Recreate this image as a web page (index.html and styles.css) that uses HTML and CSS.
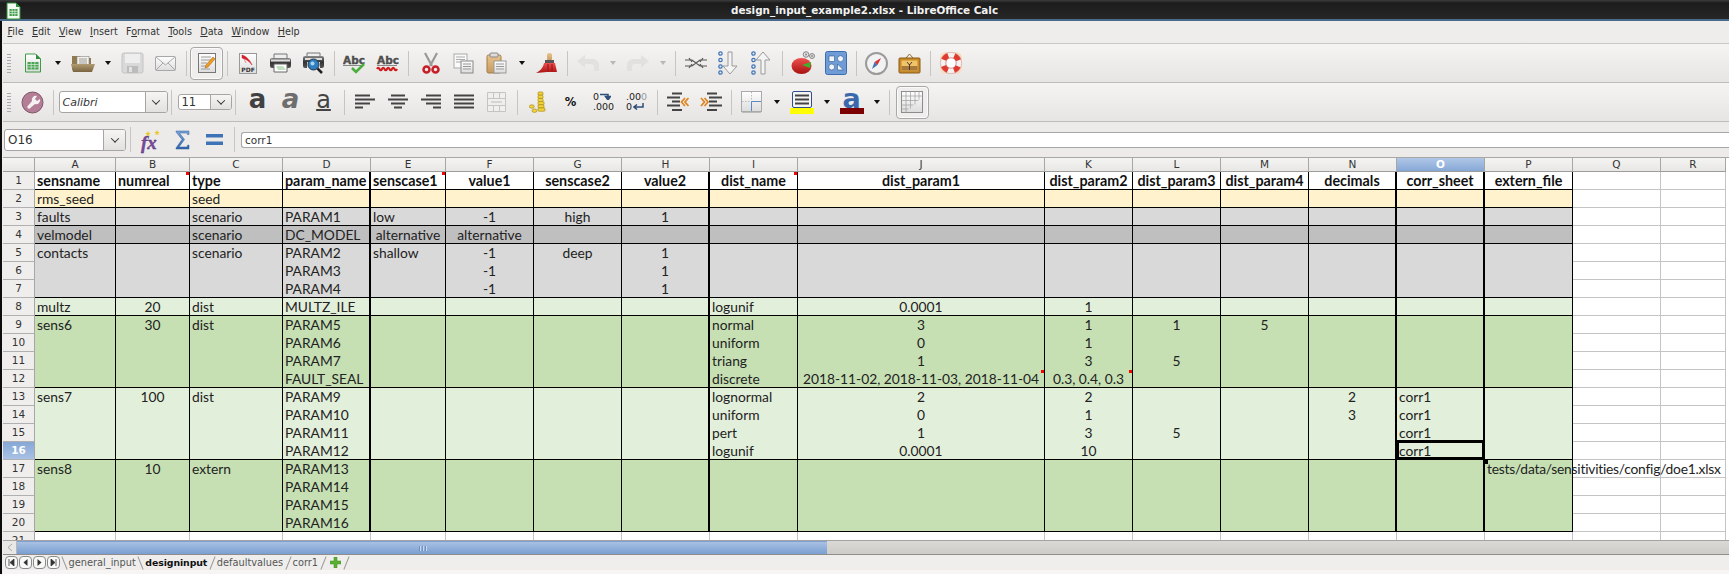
FILE: index.html
```html
<!DOCTYPE html>
<html lang="en">
<head>
<meta charset="utf-8">
<title>design_input_example2.xlsx - LibreOffice Calc</title>
<link rel="stylesheet" href="styles.css">
</head>
<body>
<svg class="defs" aria-hidden="true"><defs>
<linearGradient id="gDark" x1="0" y1="0" x2="0" y2="1"><stop offset="0" stop-color="#8a8a8a"/><stop offset=".5" stop-color="#333"/><stop offset="1" stop-color="#555"/></linearGradient>
<linearGradient id="gBlue" x1="0" y1="0" x2="0" y2="1"><stop offset="0" stop-color="#7ea6dc"/><stop offset="1" stop-color="#2f62a8"/></linearGradient>
<linearGradient id="gTan" x1="0" y1="0" x2="0" y2="1"><stop offset="0" stop-color="#e9c48e"/><stop offset="1" stop-color="#c79a5e"/></linearGradient>
<linearGradient id="gRed" x1="0" y1="0" x2="0" y2="1"><stop offset="0" stop-color="#f05050"/><stop offset="1" stop-color="#a81010"/></linearGradient>
<linearGradient id="gPaper" x1="0" y1="0" x2="0" y2="1"><stop offset="0" stop-color="#fff"/><stop offset="1" stop-color="#dcdcdc"/></linearGradient>
<linearGradient id="gFolder" x1="0" y1="0" x2="0" y2="1"><stop offset="0" stop-color="#b09c72"/><stop offset="1" stop-color="#7a6440"/></linearGradient>
</defs></svg>

<header class="titlebar">
  <svg class="appicon" width="15" height="18" viewBox="0 0 15 18"><path d="M1 1h9l4 4v12H1z" fill="#f4fbf2" stroke="#2f8f3a"/><path d="M10 1l4 4h-4z" fill="#2f8f3a"/><rect x="3.500" y="7" width="8" height="7" fill="#3c9c46"/><path d="M3.500 9.300h8M3.500 11.600h8M6.200 7v7M8.900 7v7" stroke="#e8f5e6" stroke-width=".7"/></svg>
  <span class="titletext">design_input_example2.xlsx - LibreOffice Calc</span>
</header>

<div class="window">
<nav class="menubar">
  <span><u>F</u>ile</span><span><u>E</u>dit</span><span><u>V</u>iew</span><span><u>I</u>nsert</span><span>F<u>o</u>rmat</span><span><u>T</u>ools</span><span><u>D</u>ata</span><span><u>W</u>indow</span><span><u>H</u>elp</span>
</nav>

<div class="toolbar">
  <i class="grip"></i>
  <b class="btn"><svg width="18" height="20" viewBox="0 0 18 20"><path d="M1.500 1h10l5 5v13h-15z" fill="url(#gPaper)" stroke="#3f9a45"/><path d="M12 1l5 5h-5z" fill="#2f8f3a"/><rect x="3.500" y="9" width="11" height="7.500" fill="#49a552"/><path d="M3.500 11.500h11M3.500 14h11M7.200 9v7.500M10.900 9v7.500" stroke="#dff0dc" stroke-width=".7"/></svg></b>
  <b class="dd"><i class="arrow"></i></b>
  <b class="btn"><svg width="24" height="20" viewBox="0 0 24 20"><path d="M1 3h8l2 2h9v12H1z" fill="#8f7a52"/><rect x="6" y="3.500" width="12" height="9" fill="#f3f1ea" stroke="#888" stroke-width=".6"/><path d="M8 6h8M8 8h8M8 10h8" stroke="#888" stroke-width=".8"/><path d="M0 11h24l-3 8H2z" fill="url(#gFolder)"/></svg></b>
  <b class="dd"><i class="arrow"></i></b>
  <b class="btn"><svg width="23" height="22" viewBox="0 0 23 22"><rect x="1" y="1" width="21" height="20" rx="2" fill="#d9d9d9" stroke="#c4c4c4"/><rect x="4" y="2" width="15" height="9" fill="#eee"/><rect x="6" y="14" width="11" height="7" fill="#bcbcbc"/><rect x="8" y="15" width="3" height="5" fill="#e2e2e2"/></svg></b>
  <b class="btn"><svg width="21" height="15" viewBox="0 0 21 15"><rect x=".5" y=".5" width="20" height="14" rx="1" fill="url(#gPaper)" stroke="#a8a8a8"/><path d="M1 1l9.500 8L20 1M1 14l7-7M20 14l-7-7" fill="none" stroke="#a8a8a8"/></svg></b>
  <i class="sep"></i>
  <b class="btn on"><svg width="18" height="22" viewBox="0 0 18 22"><rect x=".5" y="1.500" width="17" height="19" fill="url(#gPaper)" stroke="#777"/><path d="M3 5h10M3 8h10M3 11h6M3 14h5M3 17h9" stroke="#9a9a9a"/><path d="M7 16l1-3 7-8 2 2-7 8z" fill="#f09a20" stroke="#a85e10" stroke-width=".5"/></svg></b>
  <i class="sep"></i>
  <b class="btn"><svg width="18" height="21" viewBox="0 0 18 21"><rect x=".5" y=".5" width="17" height="20" fill="url(#gPaper)" stroke="#999"/><path d="M3 2c4 1 8 5 10 10-3-4-6-6-10-7zM3 2l4 8" fill="#d4202a" stroke="#d4202a" stroke-width=".5"/><text x="9" y="19" class="pdf">PDF</text></svg></b>
  <b class="btn"><svg width="23" height="20" viewBox="0 0 23 20"><path d="M5 1h13v5H5z" fill="#eee" stroke="#777"/><rect x="1" y="5" width="21" height="10" rx="2" fill="url(#gDark)"/><rect x="2" y="6.500" width="19" height="2" fill="#ddd"/><path d="M5 11h13v8H5z" fill="#fff" stroke="#666"/><path d="M7 13h7l3 4H9z" fill="#bfe0bf"/></svg></b>
  <b class="btn"><svg width="24" height="22" viewBox="0 0 24 22"><path d="M5 1h13v5H5z" fill="#eee" stroke="#777"/><rect x="1" y="4" width="21" height="12" rx="2" fill="url(#gDark)"/><rect x="3" y="6" width="17" height="2" fill="#ddd"/><rect x="5" y="10" width="13" height="9" fill="#eee"/><circle cx="11.500" cy="12.500" r="5.500" fill="#2f7fc0" stroke="#234"/><circle cx="10.500" cy="11.500" r="2" fill="#a8d6f0"/><path d="M15.500 16.500l4.500 4.500" stroke="#222" stroke-width="2.500"/></svg></b>
  <i class="sep"></i>
  <b class="btn"><svg width="24" height="21" viewBox="0 0 24 21"><text x="0" y="11" class="abc">Abc</text><path d="M0 12.500h21" stroke="#888"/><path d="M9 15l4 4 8-8" fill="none" stroke="#4cae3c" stroke-width="2.600"/></svg></b>
  <b class="btn"><svg width="23" height="21" viewBox="0 0 23 21"><text x="1" y="11" class="abc">Abc</text><path d="M1 12.500h20" stroke="#888"/><path d="M1 16q1.200-2.500 2.500 0t2.500 0 2.500 0 2.500 0 2.500 0 2.500 0 2.500 0 2.500 0" fill="none" stroke="#d01c1c" stroke-width="2.200"/></svg></b>
  <i class="sep sep-r"></i>
  <b class="btn"><svg width="18" height="22" viewBox="0 0 18 22"><path d="M3 1l7 13M15 1L8 14" stroke="#999" stroke-width="2.200"/><circle cx="4.500" cy="17.500" r="3" fill="none" stroke="#c81e28" stroke-width="2.500"/><circle cx="13.500" cy="17.500" r="3" fill="none" stroke="#c81e28" stroke-width="2.500"/></svg></b>
  <b class="btn"><svg width="21" height="21" viewBox="0 0 21 21"><rect x="1" y="1" width="13" height="14" fill="#fafafa" stroke="#aaa"/><path d="M3 4h9M3 6.500h9M3 9h9" stroke="#aaa"/><rect x="8" y="8" width="12" height="12" fill="url(#gPaper)" stroke="#888"/><path d="M10 11h8M10 13.500h8M10 16h8" stroke="#999"/></svg></b>
  <b class="btn"><svg width="21" height="22" viewBox="0 0 21 22"><rect x="1" y="3" width="14" height="18" rx="1.500" fill="url(#gTan)" stroke="#a07c48"/><rect x="4" y="1" width="8" height="4" rx="1" fill="#ddd" stroke="#888"/><rect x="8" y="9" width="12" height="12" fill="url(#gPaper)" stroke="#999"/><path d="M10 12h8M10 14.500h8M10 17h8" stroke="#999"/></svg></b>
  <b class="dd"><i class="arrow"></i></b>
  <b class="btn"><svg width="23" height="22" viewBox="0 0 23 22"><rect x="12" y="1" width="5" height="8" rx="2" fill="url(#gTan)"/><rect x="10" y="8" width="9" height="3" fill="#555"/><path d="M9 11h11l2 9H12L1 21c4-2 7-5 8-10z" fill="url(#gRed)"/><path d="M13 12v7M17 12v7" stroke="#8e1414"/></svg></b>
  <i class="sep"></i>
  <b class="btn off"><svg width="24" height="18" viewBox="0 0 24 18"><path d="M1 7l8-6v4h8q6 1 6 6v6h-5v-4q0-3-3-3H9v4z" fill="#e2e1df"/></svg></b>
  <b class="dd"><i class="arrow pale"></i></b>
  <b class="btn off"><svg width="24" height="18" viewBox="0 0 24 18"><path d="M23 7l-8-6v4H7q-6 1-6 6v6h5v-4q0-3 3-3h6v4z" fill="#e2e1df"/></svg></b>
  <b class="dd"><i class="arrow pale"></i></b>
  <i class="sep"></i>
  <b class="btn"><svg width="22" height="12" viewBox="0 0 22 12"><path d="M0 3h7l4 3 4-3h7M0 9h7l4-3 4 3h7M4 1l3 4M4 11l3-4M18 1l-3 4M18 11l-3-4" fill="none" stroke="#555" stroke-width="1.200"/></svg></b>
  <b class="btn"><svg width="21" height="24" viewBox="0 0 21 24"><g fill="none" stroke="#3f73b8" stroke-width="1.200"><circle cx="2.500" cy="2.500" r="1.700"/><circle cx="2.500" cy="9" r="1.700"/><circle cx="2.500" cy="15.500" r="1.700"/><circle cx="2.500" cy="21.500" r="1.700"/></g><path d="M10 1h4v14h5l-7 8-7-8h5z" fill="#f4f4f4" stroke="#9a9a9a"/></svg></b>
  <b class="btn"><svg width="21" height="24" viewBox="0 0 21 24"><g fill="none" stroke="#3f73b8" stroke-width="1.200"><circle cx="2.500" cy="2.500" r="1.700"/><circle cx="2.500" cy="9" r="1.700"/><circle cx="2.500" cy="15.500" r="1.700"/><circle cx="2.500" cy="21.500" r="1.700"/></g><path d="M10 23h4V9h5l-7-8-7 8h5z" fill="#f4f4f4" stroke="#9a9a9a"/></svg></b>
  <i class="sep"></i>
  <b class="btn"><svg width="24" height="24" viewBox="0 0 24 24"><ellipse cx="10.500" cy="15" rx="10" ry="8" fill="url(#gRed)"/><path d="M11 14l9-3-1 6z" fill="#43b02a"/><circle cx="15" cy="3.500" r="2.800" fill="#ddd" stroke="#888"/><circle cx="21" cy="5" r="2.500" fill="#ddd" stroke="#888"/><circle cx="15" cy="3.500" r=".9" fill="#888"/><circle cx="21" cy="5" r=".9" fill="#888"/></svg></b>
  <b class="btn"><svg width="22" height="24" viewBox="0 0 22 24"><rect x=".5" y=".5" width="21" height="23" rx="2" fill="#6f9bd6" stroke="#3a6db0"/><rect x="4" y="5" width="5.500" height="5.500" fill="#f0f5fc" stroke="#2c558c" stroke-width=".6"/><circle cx="15.500" cy="7.700" r="3" fill="#f0f5fc" stroke="#2c558c" stroke-width=".6"/><circle cx="6.700" cy="16" r="3" fill="#f0f5fc" stroke="#2c558c" stroke-width=".6"/><path d="M12.500 19v-6l6 6z" fill="#f0f5fc" stroke="#2c558c" stroke-width=".6"/></svg></b>
  <i class="sep"></i>
  <b class="btn"><svg width="23" height="23" viewBox="0 0 23 23"><circle cx="11.500" cy="11.500" r="10.500" fill="#f2f2f2" stroke="#9a9a9a" stroke-width="2"/><path d="M16 6l-3.500 7-3-3z" fill="#d83030"/><path d="M7 17l2.500-7 3 3z" fill="#3f73b8"/></svg></b>
  <b class="btn"><svg width="23" height="22" viewBox="0 0 23 22"><path d="M8 6l3.500-4L15 6" fill="none" stroke="#8a6a34"/><rect x="1" y="6" width="21" height="15" rx="1" fill="#c98a28" stroke="#8a5a14"/><rect x="3.500" y="8.500" width="16" height="10" fill="#f0c468"/><path d="M3.500 14h16v4.500h-16z" fill="#a87a3a"/><path d="M11.500 18v-6M9 10l2.500 3 2.500-3" stroke="#533" fill="none"/></svg></b>
  <i class="sep"></i>
  <b class="btn"><svg width="24" height="24" viewBox="0 0 24 24"><rect x="1" y="1" width="22" height="22" rx="6" fill="#f8dcc0"/><circle cx="12" cy="12" r="8" fill="none" stroke="#f4f2f0" stroke-width="5.500"/><circle cx="12" cy="12" r="8" fill="none" stroke="#e0392e" stroke-width="5.500" stroke-dasharray="6.300 6.270" stroke-dashoffset="3.100" transform="rotate(45 12 12)"/><circle cx="12" cy="12" r="5.200" fill="#fff" stroke="#b55" stroke-width=".6"/><circle cx="12" cy="12" r="10.700" fill="none" stroke="#c88" stroke-width=".5"/></svg></b>
</div>

<div class="toolbar">
  <i class="grip"></i>
  <b class="btn"><svg width="23" height="23" viewBox="0 0 23 23"><circle cx="11.500" cy="11.500" r="10.500" fill="#b47f96" stroke="#7d5468"/><path d="M16 5a4 4 0 0 0-5 5l-5 6 2 2 6-5a4 4 0 0 0 5-5l-3 2-2-2z" fill="#f6f2f3"/></svg></b>
  <i class="sep wide"></i>
  <div class="combo fontname"><span>Calibri</span><b class="drop"><i class="chev"></i></b></div>
  <i class="sep narrow"></i>
  <div class="combo fontsize"><span>11</span><b class="drop"><i class="chev"></i></b></div>
  <i class="sep wide"></i>
  <b class="btn"><span class="glyph bold">a</span></b>
  <b class="btn"><span class="glyph ital">a</span></b>
  <b class="btn"><span class="glyph under">a</span></b>
  <i class="sep"></i>
  <b class="btn"><svg width="20" height="16" viewBox="0 0 20 16"><path d="M0 1.500h15M0 5.500h20M0 9.500h15M0 13.500h8" stroke="#444" stroke-width="2"/></svg></b>
  <b class="btn"><svg width="20" height="16" viewBox="0 0 20 16"><path d="M3 1.500h14M0 5.500h20M3 9.500h14M6 13.500h8" stroke="#444" stroke-width="2"/></svg></b>
  <b class="btn"><svg width="20" height="16" viewBox="0 0 20 16"><path d="M5 1.500h15M0 5.500h20M5 9.500h15M12 13.500h8" stroke="#444" stroke-width="2"/></svg></b>
  <b class="btn"><svg width="20" height="16" viewBox="0 0 20 16"><path d="M0 1.500h20M0 5.500h20M0 9.500h20M0 13.500h20" stroke="#444" stroke-width="2"/></svg></b>
  <b class="btn"><svg width="19" height="20" viewBox="0 0 19 20"><path d="M.5.500h18v19H.5zM.5 6.500h18M.5 13.500h18M6.500.500v6M12.500.500v6M6.500 13.500v6M12.500 13.500v6" fill="#f0efee" stroke="#c4c4c4"/><path d="M4 10h11" stroke="#bbb"/></svg></b>
  <i class="sep"></i>
  <b class="btn"><svg width="17" height="22" viewBox="0 0 17 22"><g fill="#f2d43a" stroke="#a88a14" stroke-width=".7"><rect x="9" y="1" width="5" height="3.200" rx="1"/><rect x="9" y="4.200" width="5" height="3.200" rx="1"/><rect x="9" y="7.400" width="5" height="3.200" rx="1"/><rect x="9" y="10.600" width="6" height="3.200" rx="1"/><rect x="9" y="13.800" width="6" height="3.200" rx="1"/><rect x="9" y="17" width="7" height="3.200" rx="1"/><ellipse cx="2.800" cy="15.500" rx="2.500" ry="1.700"/><ellipse cx="5.500" cy="19.700" rx="2.500" ry="1.700"/></g></svg></b>
  <b class="btn"><span class="pct">%</span></b>
  <b class="btn"><span class="numfmt"><span>0<svg width="11" height="7" viewBox="0 0 11 7"><path d="M0 1.500h8v4M5.500 3.500h5L8 7z" fill="none" stroke="#2f4f7a" stroke-width="1.500"/></svg></span><span>.000</span></span></b>
  <b class="btn"><span class="numfmt"><span>.00<em>0</em></span><span>0<svg width="11" height="7" viewBox="0 0 11 7"><path d="M10 0v4H2M4 1.500L1 4l3 2.500" fill="none" stroke="#2f4f7a" stroke-width="1.500"/></svg></span></span></b>
  <i class="sep"></i>
  <b class="btn"><svg width="22" height="20" viewBox="0 0 22 20"><path d="M5 1.500h10M0 5.500h13M5 9.500h8M0 13.500h13M5 18h10" stroke="#444" stroke-width="2"/><path d="M18 6l-3.500 4 3.500 4M21.500 6L18 10l3.500 4" fill="none" stroke="#e08420" stroke-width="1.700"/></svg></b>
  <b class="btn"><svg width="22" height="20" viewBox="0 0 22 20"><path d="M7 1.500h10M9 5.500h13M9 9.500h8M9 13.500h13M7 18h10" stroke="#444" stroke-width="2"/><path d="M1 6l3.500 4L1 14M4.500 6L8 10l-3.500 4" fill="none" stroke="#e08420" stroke-width="1.700"/></svg></b>
  <i class="sep"></i>
  <b class="btn"><svg width="21" height="22" viewBox="0 0 21 22"><rect x=".5" y=".5" width="20" height="20" fill="url(#gPaper)" stroke="#aaa"/><path d="M10.500 1v9.500M1 10.500h9.500" stroke="#b9b9b9" stroke-dasharray="1.500 1.500"/><path d="M10.500 10.500V20M10.500 10.500H20" stroke="#5c8ac4"/><path d="M1 21.500h19" stroke="#bbb"/></svg></b>
  <b class="dd"><i class="arrow"></i></b>
  <b class="btn"><span class="swatchicon"><svg width="20" height="17" viewBox="0 0 20 17"><rect x=".5" y=".5" width="19" height="16" rx="1.500" fill="#f5f5f5" stroke="#2f4f8a"/><path d="M3 4.500h14M3 8.500h14M3 12.500h14" stroke="#444" stroke-width="2"/></svg><i class="swatch yellow"></i></span></b>
  <b class="dd"><i class="arrow"></i></b>
  <b class="btn"><span class="swatchicon"><span class="glyph blue">a</span><i class="swatch maroon"></i></span></b>
  <b class="dd"><i class="arrow"></i></b>
  <i class="sep sep-last"></i>
  <b class="btn on"><svg width="22" height="22" viewBox="0 0 22 22"><rect x=".5" y=".5" width="21" height="21" fill="url(#gPaper)" stroke="#8c8c8c"/><path d="M.5 5h21M.5 9.500h17M.5 14h12M.5 18h7M5 .5v21M9.500.5v17M14 .5v13M18 .5v8" stroke="#a6a6a6" stroke-width=".8"/></svg></b>
</div>

<div class="formulabar">
  <div class="combo namebox"><span>O16</span><b class="drop"><i class="chev"></i></b></div>
  <i class="sep"></i>
  <b class="btn fbtn"><svg class="fxicon" width="24" height="24" viewBox="0 0 24 24"><text x="3" y="21" class="fx">fx</text><path d="M10 3l.8 1.800 1.800.2-1.300 1.300.3 1.900-1.600-1-1.600 1 .3-1.900L7.400 5l1.800-.2zM19 2l.8 1.800 1.800.2-1.300 1.300.3 1.900-1.600-1-1.600 1 .3-1.900L16.400 4l1.800-.2z" fill="#e8c82c"/></svg></b>
  <b class="btn fbtn"><svg width="15" height="20" viewBox="0 0 15 20"><path d="M1 1h13v3.500h-1.500L12 3H4.500l5 6.500-5.500 7.500h8l.8-2H14v4H1v-1l6-8.500L1 2z" fill="url(#gBlue)" stroke="#2f5f9e" stroke-width=".5"/></svg></b>
  <b class="btn fbtn"><svg width="17" height="11" viewBox="0 0 17 11"><rect y="0" width="17" height="3.500" fill="#3f73b8"/><rect y="7.500" width="17" height="3.500" fill="#3f73b8"/></svg></b>
  <i class="sep"></i>
  <div class="formulainput">corr1</div>
</div>

<div class="sheet">
<table class="grid">
<colgroup><col class="c-row"><col class="c-a"><col class="c-b"><col class="c-c"><col class="c-d"><col class="c-e"><col class="c-n"><col class="c-n"><col class="c-n"><col class="c-n"><col class="c-j"><col class="c-n"><col class="c-n"><col class="c-n"><col class="c-n"><col class="c-n"><col class="c-n"><col class="c-n"><col class="c-r"></colgroup>
<thead>
<tr><th class="corner"></th><th>A</th><th>B</th><th>C</th><th>D</th><th>E</th><th>F</th><th>G</th><th>H</th><th>I</th><th>J</th><th>K</th><th>L</th><th>M</th><th>N</th><th class="active">O</th><th>P</th><th>Q</th><th>R</th></tr>
</thead>
<tbody class="hdr">
<tr><th>1</th><td>sensname</td><td class="note">numreal</td><td>type</td><td class="t">param_name</td><td class="note">senscase1</td><td class="m">value1</td><td class="m">senscase2</td><td class="m t">value2</td><td class="note m">dist_name</td><td class="m">dist_param1</td><td class="m">dist_param2</td><td class="m">dist_param3</td><td class="m">dist_param4</td><td class="m t">decimals</td><td class="m t">corr_sheet</td><td class="m">extern_file</td><td class="e"></td><td class="e"></td></tr>
</tbody>
<tbody class="seed">
<tr><th>2</th><td>rms_seed</td><td></td><td>seed</td><td class="t"></td><td></td><td></td><td></td><td class="t"></td><td></td><td></td><td></td><td></td><td></td><td class="t"></td><td class="t"></td><td></td><td class="e"></td><td class="e"></td></tr>
</tbody>
<tbody class="grey">
<tr><th>3</th><td>faults</td><td></td><td>scenario</td><td class="t">PARAM1</td><td>low</td><td class="m">-1</td><td class="m">high</td><td class="m t">1</td><td></td><td></td><td></td><td></td><td></td><td class="t"></td><td class="t"></td><td></td><td class="e"></td><td class="e"></td></tr>
</tbody>
<tbody class="dark">
<tr><th>4</th><td>velmodel</td><td></td><td>scenario</td><td class="t">DC_MODEL</td><td class="m">alternative</td><td class="m">alternative</td><td></td><td class="t"></td><td></td><td></td><td></td><td></td><td></td><td class="t"></td><td class="t"></td><td></td><td class="e"></td><td class="e"></td></tr>
</tbody>
<tbody class="grey">
<tr><th>5</th><td>contacts</td><td></td><td>scenario</td><td class="t">PARAM2</td><td>shallow</td><td class="m">-1</td><td class="m">deep</td><td class="m t">1</td><td></td><td></td><td></td><td></td><td></td><td class="t"></td><td class="t"></td><td></td><td class="e"></td><td class="e"></td></tr>
<tr><th>6</th><td></td><td></td><td></td><td class="t">PARAM3</td><td></td><td class="m">-1</td><td></td><td class="m t">1</td><td></td><td></td><td></td><td></td><td></td><td class="t"></td><td class="t"></td><td></td><td class="e"></td><td class="e"></td></tr>
<tr><th>7</th><td></td><td></td><td></td><td class="t">PARAM4</td><td></td><td class="m">-1</td><td></td><td class="m t">1</td><td></td><td></td><td></td><td></td><td></td><td class="t"></td><td class="t"></td><td></td><td class="e"></td><td class="e"></td></tr>
</tbody>
<tbody class="pale">
<tr><th>8</th><td>multz</td><td class="m">20</td><td>dist</td><td class="t">MULTZ_ILE</td><td></td><td></td><td></td><td class="t"></td><td>logunif</td><td class="m">0.0001</td><td class="m">1</td><td></td><td></td><td class="t"></td><td class="t"></td><td></td><td class="e"></td><td class="e"></td></tr>
</tbody>
<tbody class="green">
<tr><th>9</th><td>sens6</td><td class="m">30</td><td>dist</td><td class="t">PARAM5</td><td></td><td></td><td></td><td class="t"></td><td>normal</td><td class="m">3</td><td class="m">1</td><td class="m">1</td><td class="m">5</td><td class="t"></td><td class="t"></td><td></td><td class="e"></td><td class="e"></td></tr>
<tr><th>10</th><td></td><td></td><td></td><td class="t">PARAM6</td><td></td><td></td><td></td><td class="t"></td><td>uniform</td><td class="m">0</td><td class="m">1</td><td></td><td></td><td class="t"></td><td class="t"></td><td></td><td class="e"></td><td class="e"></td></tr>
<tr><th>11</th><td></td><td></td><td></td><td class="t">PARAM7</td><td></td><td></td><td></td><td class="t"></td><td>triang</td><td class="m">1</td><td class="m">3</td><td class="m">5</td><td></td><td class="t"></td><td class="t"></td><td></td><td class="e"></td><td class="e"></td></tr>
<tr><th>12</th><td></td><td></td><td></td><td class="t">FAULT_SEAL</td><td></td><td></td><td></td><td class="t"></td><td>discrete</td><td class="m note">2018-11-02, 2018-11-03, 2018-11-04</td><td class="m note">0.3, 0.4, 0.3</td><td></td><td></td><td class="t"></td><td class="t"></td><td></td><td class="e"></td><td class="e"></td></tr>
</tbody>
<tbody class="pale">
<tr><th>13</th><td>sens7</td><td class="m">100</td><td>dist</td><td class="t">PARAM9</td><td></td><td></td><td></td><td class="t"></td><td>lognormal</td><td class="m">2</td><td class="m">2</td><td></td><td></td><td class="m t">2</td><td class="t">corr1</td><td></td><td class="e"></td><td class="e"></td></tr>
<tr><th>14</th><td></td><td></td><td></td><td class="t">PARAM10</td><td></td><td></td><td></td><td class="t"></td><td>uniform</td><td class="m">0</td><td class="m">1</td><td></td><td></td><td class="m t">3</td><td class="t">corr1</td><td></td><td class="e"></td><td class="e"></td></tr>
<tr><th>15</th><td></td><td></td><td></td><td class="t">PARAM11</td><td></td><td></td><td></td><td class="t"></td><td>pert</td><td class="m">1</td><td class="m">3</td><td class="m">5</td><td></td><td class="t"></td><td class="t">corr1</td><td></td><td class="e"></td><td class="e"></td></tr>
<tr><th class="active">16</th><td></td><td></td><td></td><td class="t">PARAM12</td><td></td><td></td><td></td><td class="t"></td><td>logunif</td><td class="m">0.0001</td><td class="m">10</td><td></td><td></td><td class="t"></td><td class="t cursor">corr1<i class="selbox"></i><i class="handle"></i></td><td></td><td class="e"></td><td class="e"></td></tr>
</tbody>
<tbody class="green">
<tr><th>17</th><td>sens8</td><td class="m">10</td><td>extern</td><td class="t">PARAM13</td><td></td><td></td><td></td><td class="t"></td><td></td><td></td><td></td><td></td><td></td><td class="t"></td><td class="t"></td><td class="path">tests/data/sensitivities/config/doe1.xlsx</td><td class="e"></td><td class="e"></td></tr>
<tr><th>18</th><td></td><td></td><td></td><td class="t">PARAM14</td><td></td><td></td><td></td><td class="t"></td><td></td><td></td><td></td><td></td><td></td><td class="t"></td><td class="t"></td><td></td><td class="e"></td><td class="e"></td></tr>
<tr><th>19</th><td></td><td></td><td></td><td class="t">PARAM15</td><td></td><td></td><td></td><td class="t"></td><td></td><td></td><td></td><td></td><td></td><td class="t"></td><td class="t"></td><td></td><td class="e"></td><td class="e"></td></tr>
<tr><th>20</th><td></td><td></td><td></td><td class="t">PARAM16</td><td></td><td></td><td></td><td class="t"></td><td></td><td></td><td></td><td></td><td></td><td class="t"></td><td class="t"></td><td></td><td class="e"></td><td class="e"></td></tr>
</tbody>
<tbody class="blank">
<tr><th>21</th><td></td><td></td><td></td><td></td><td></td><td></td><td></td><td></td><td></td><td></td><td></td><td></td><td></td><td></td><td></td><td></td><td></td><td></td></tr>
</tbody>
</table>
</div>

<div class="hscroll">
  <b class="sbtn"><svg width="6" height="9" viewBox="0 0 6 9"><path d="M5 1L1 4.500 5 8" fill="none" stroke="#aaa"/></svg></b>
  <div class="thumb"><i></i><i></i><i></i></div>
</div>

<div class="tabbar">
  <div class="navs">
    <b><svg width="7" height="7" viewBox="0 0 7 7"><path d="M1 0v7M6 0L2 3.500 6 7z" stroke="#333" fill="#333" stroke-width=".8"/></svg></b>
    <b><svg width="7" height="7" viewBox="0 0 7 7"><path d="M5.500 0L1.500 3.500 5.500 7z" fill="#333"/></svg></b>
    <b><svg width="7" height="7" viewBox="0 0 7 7"><path d="M1.500 0l4 3.500-4 3.500z" fill="#333"/></svg></b>
    <b><svg width="7" height="7" viewBox="0 0 7 7"><path d="M6 0v7M1 0l4 3.500L1 7z" stroke="#333" fill="#333" stroke-width=".8"/></svg></b>
  </div>
  <span class="tab first">general_input</span>
  <span class="tab current">designinput</span>
  <span class="tab">defaultvalues</span>
  <span class="tab">corr1</span>
  <span class="tab add"><svg width="11" height="11" viewBox="0 0 11 11"><path d="M4 0h3v4h4v3H7v4H4V7H0V4h4z" fill="#58b030" stroke="#3f8a20" stroke-width=".5"/></svg></span>
</div>
<div class="statusedge"></div>
</div>
</body>
</html>
```

FILE: styles.css
```css
* { box-sizing: border-box; }
html, body { margin: 0; height: 100%; }
body {
  width: 1729px; height: 574px; overflow: hidden;
  display: flex; flex-direction: column;
  background: #efeeec;
  font-family: "DejaVu Sans", sans-serif; color: #222;
}
.defs { position: absolute; width: 0; height: 0; }

.titlebar {
  height: 21px; flex: none; position: relative;
  display: flex; align-items: center; justify-content: center;
  background: linear-gradient(#3c3c3c 0, #1c1c1c 3px, #262626 18px);
  border-bottom: 2px solid #4a6a8c;
}
.appicon { position: absolute; left: 6px; top: 2px; }
.titletext { color: #f2f2f2; font-size: 10.4px; font-weight: 700; }

.window {
  flex: 1; min-height: 0; display: flex; flex-direction: column;
  border-left: 2px solid #0c0c0c; padding-left: 1px;
  background: #efeeec;
}
.menubar {
  height: 23px; flex: none; display: flex; align-items: center; gap: 8.400px;
  padding: 0 0 1px 4.500px; font-size: 9.600px; color: #333;
  background: #eeedeb; border-bottom: 1px solid #c9c8c6;
}

.toolbar {
  height: 39px; flex: none; display: flex; align-items: center;
  background: linear-gradient(#f5f4f3, #e6e5e3);
  border-bottom: 1px solid #bdbcba;
  font-weight: 400;
}
.grip {
  width: 4px; height: 20px; margin: 0 5.500px 0 3.500px; flex: none;
  background: radial-gradient(circle, #aaa 0.7px, transparent 1px) 0 0 / 2px 3px;
}
.btn {
  width: 33px; height: 33px; flex: none; font-weight: 400;
  display: flex; align-items: center; justify-content: center;
}
.btn.on { border: 1px solid #a9a8a6; border-radius: 4px; background: #efeeed; box-shadow: inset 0 0 0 1px #fafafa; }
.dd { width: 17px; height: 33px; flex: none; display: flex; align-items: center; justify-content: center; }
.arrow { width: 0; height: 0; border: 3.500px solid transparent; border-top: 4px solid #111; border-bottom: 0; }
.arrow.pale { border-top-color: #b8b8b8; }
.sep { width: 8px; height: 25px; flex: none; position: relative; }
.sep::after { content: ""; position: absolute; left: 3.500px; top: 0; bottom: 0; width: 1px; background: #c6c5c3; }
.sep.narrow { width: 10px; }
.sep.wide { width: 9.500px; }
.sep.sep-r { width: 10px; }
.sep.sep-last { width: 10.500px; }

.pdf { font: 700 6px "DejaVu Sans", sans-serif; fill: #333; text-anchor: middle; }
.abc { font: 700 10.500px "DejaVu Sans", sans-serif; fill: #555; stroke: #333; stroke-width: .3px; }
.fx { font: italic 700 19px "Liberation Serif", serif; fill: #7a4a9c; stroke: #4a2a70; stroke-width: .3px; }
.fxicon { overflow: visible; }

.glyph { font-family: "DejaVu Sans", sans-serif; line-height: 1; display: block; }
.glyph.bold { font-size: 26px; font-weight: 700; color: #414141; margin-top: -6px; }
.glyph.ital { font-size: 26px; font-weight: 700; font-style: italic; color: #6e6e6e; margin-top: -6px; }
.glyph.under { font-size: 24px; color: #444; margin-top: -5px; text-decoration: underline; text-decoration-thickness: 2px; }
.glyph.blue { font-size: 27px; font-weight: 700; color: #3a68ac; height: 17px; line-height: 15px; text-align: center; }
.pct { font-size: 11.500px; font-weight: 700; color: #111; }
.numfmt { display: flex; flex-direction: column; font-size: 9.500px; line-height: 10px; color: #222; align-items: flex-start; }
.numfmt svg { margin-left: 1px; }
.numfmt em { font-style: normal; color: #999; }
.swatchicon { display: flex; flex-direction: column; justify-content: flex-end; align-items: center; width: 24px; height: 24px; }
.swatch { width: 24px; height: 6px; display: block; }
.swatch.yellow { background: #ffff00; margin-top: 0; }
.swatch.maroon { background: #7c0000; margin-top: 0; }

.combo {
  flex: none; display: flex; background: #fff;
  border: 1px solid #a6a5a3; border-radius: 3px; overflow: hidden;
  font-size: 11px; color: #333;
}
.combo span { flex: 1; padding-left: 3px; display: flex; align-items: center; }
.drop {
  display: flex; align-items: center; justify-content: center;
  background: linear-gradient(#f6f5f4, #e2e1df); border-left: 1px solid #a6a5a3;
}
.chev { width: 6px; height: 6px; border: solid #333; border-width: 0 1.500px 1.500px 0; transform: rotate(45deg) translate(-1px, -1px); }
.fontname { width: 109px; height: 22px; font-style: italic; }
.fontname .drop { width: 22px; }
.fontsize { width: 54px; height: 16px; font-size: 11.500px; }
.fontsize .drop { width: 21px; }

.formulabar {
  height: 36px; flex: none; display: flex; align-items: center;
  padding-left: 1px; background: #ecebe9; border-bottom: 1px solid #a8a7a5;
}
.namebox { width: 122px; height: 22px; font-size: 12px; }
.namebox .drop { width: 22px; }
.fbtn { width: 32px; }
.formulainput {
  flex: 1; height: 16px; margin-left: 3px; padding-left: 3px;
  background: #fff; border: 1px solid #a8a7a5; border-right: 0; border-radius: 3px 0 0 3px;
  font-size: 10.500px; line-height: 14px; color: #333;
}

.sheet { height: 382px; flex: none; overflow: hidden; background: #fff; }
.grid { border-collapse: separate; border-spacing: 0; table-layout: fixed; width: 1722.500px; font-family: Lato, "Liberation Sans", sans-serif; font-size: 13.800px; color: #222; }
.c-row { width: 32px; } .c-a { width: 81px; } .c-b { width: 74px; } .c-c { width: 93px; } .c-d { width: 88px; }
.c-e { width: 75px; } .c-n { width: 88px; } .c-j { width: 247px; } .c-r { width: 65px; }

.grid thead th {
  height: 14px; padding: 0; font: 400 10.500px/13px "DejaVu Sans", sans-serif; color: #333;
  background: linear-gradient(#f4f4f3, #e8e7e6);
  border-right: 1px solid #a6a6a6; border-bottom: 1px solid #9c9c9c;
}
.grid thead th.active { background: linear-gradient(#b0c7e7, #86a8d6); color: #fff; font-weight: 700; }
.grid tbody th {
  height: 18px; padding: 0; font: 400 10.500px/17px "DejaVu Sans", sans-serif; color: #333; text-align: center;
  background: #efeeed; border-right: 1px solid #a6a6a6; border-bottom: 1px solid #b0b0b0;
}
.grid tbody th.active { background: linear-gradient(#86a8d6, #a9c1e4); color: #fff; font-weight: 700; }
.grid td {
  height: 18px; padding: 0 0 0 2px; white-space: nowrap; line-height: 16px;
  border-right: 1px solid #000;
}
.grid td.m { text-align: center; padding: 0; }
.grid td.t { border-right-width: 2px; }
.grid td.e { border-right: 1px solid #c4c4c4; border-bottom: 1px solid #c4c4c4; background: transparent; }
.grid td.path { letter-spacing: -.22px; }
.grid tbody tr:last-child td:not(.e) { border-bottom: 1px solid #000; }
.hdr td { font-weight: 700; font-size: 14.300px; color: #111; background: #fff; }
.seed td { background: #fff2cc; }
.grey td { background: #d9d9d9; }
.dark td { background: #bfbfbf; }
.pale td { background: #e2efda; }
.green td { background: #c6e0b4; }
.blank td { border-right: 1px solid #c4c4c4; background: #fff; }
.blank tr:last-child td:not(.e) { border-bottom: 0; }
.note, .cursor { position: relative; }
.note::after { content: ""; position: absolute; top: 0; right: 0; width: 3px; height: 3px; background: #f00; }
.selbox { position: absolute; left: -1px; top: -2px; right: -2px; bottom: -1px; border: 3px solid #000; }
.handle { position: absolute; right: -5px; bottom: -5px; width: 5px; height: 5px; background: #000; z-index: 1; }

.hscroll {
  height: 15px; flex: none; display: flex;
  background: linear-gradient(#dad9d6, #cdccc9); border-top: 1px solid #a4a3a1; border-bottom: 1px solid #8f8e8c;
}
.sbtn { width: 14px; display: flex; align-items: center; justify-content: center; background: #e9e8e6; border-right: 1px solid #b8b7b5; }
.thumb {
  width: 810px; display: flex; gap: 2px; align-items: center; justify-content: center;
  background: linear-gradient(#a9c1e3, #7a9fd2); border-top: 1px solid #7fa0d0;
}
.thumb i { width: 1px; height: 5px; background: #6f8fbf; box-shadow: 1px 0 #c9d8ee; }

.tabbar {
  height: 15px; flex: none; display: flex; align-items: center; padding-left: 1.500px;
  font-size: 9.800px; color: #555; background: #efeeec;
}
.navs { display: flex; gap: 1px; width: 60px; }
.navs b { width: 13px; height: 13px; border: 1px solid #8a8a8a; border-radius: 4px; display: flex; align-items: center; justify-content: center; background: #f8f8f7; }
.tab { height: 15px; display: flex; align-items: center; padding: 0 5.500px 0 4px; position: relative; }
.tab::after { content: ""; position: absolute; right: 0; top: 1px; width: 1px; height: 14px; background: #9c9b99; transform: rotate(22deg); }
.tab.first::before { content: ""; position: absolute; left: -1px; top: 1px; width: 1px; height: 14px; background: #9c9b99; transform: rotate(-22deg); }
.tab.first::after { transform: rotate(-22deg); }
.tab.current { font-weight: 700; font-size: 9.400px; letter-spacing: -.1px; color: #111; }
.tab.add { padding: 0 6px 0 6px; }
.statusedge { flex: 1; background: #f6f5f3; }
```
